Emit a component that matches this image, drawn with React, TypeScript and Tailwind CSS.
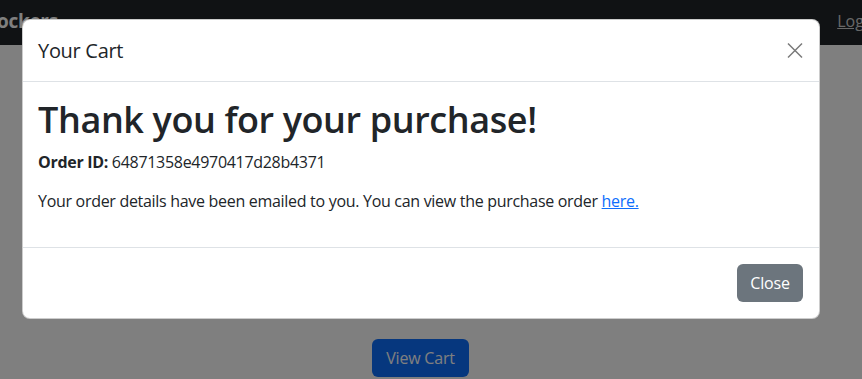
import React from "react";

export default function App() {
  return (
    <div className="relative w-[862px] h-[379px] overflow-hidden bg-white" style={{ fontFamily: '"Open Sans", "Noto Sans", sans-serif' }}>
      <nav className="h-[45px] bg-[#212529] flex items-start justify-between">
        <span className="ml-[-3px] mt-[6px] text-[19px] font-bold text-white leading-[30px] tracking-[-0.3px]">ockers</span>
        <a className="mr-[-27px] mt-[9px] text-[16px] text-[#d0d0d0] underline leading-[24px]">Logout</a>
      </nav>
      <div className="flex justify-start pl-[372px] pt-[294px]">
        <button className="h-[38px] w-[97px] rounded-[6px] bg-[#0d6efd] text-white text-[16px] tracking-[-0.2px]">View Cart</button>
      </div>
      <div className="absolute inset-0 bg-black/50">
        <div className="ml-[22px] mt-[19px] w-[798px] bg-white rounded-[8px] border border-black/20 text-[#212529]">
          <div className="h-[62px] flex items-center justify-between pl-[15px] pr-[16px] border-b border-[#dee2e6]">
            <h5 className="text-[20px] font-medium leading-[30px] tracking-[-0.3px]">Your Cart</h5>
            <button className="w-[16px] h-[16px] flex items-center justify-center text-[#7a7a7a]">
              <svg width="17" height="17" viewBox="0 0 16 16" fill="none" stroke="currentColor" strokeWidth="1.5">
                <path d="M1 1L15 15M15 1L1 15" />
              </svg>
            </button>
          </div>
          <div className="pl-[15px] pr-[16px] pt-[16px] pb-[16px]">
            <h1 className="text-[36px] font-semibold leading-[44px] mb-[8px] tracking-[-0.4px]">Thank you for your purchase!</h1>
            <p className="text-[16px] leading-[24px] mb-[15px] tracking-[-0.3px]"><b>Order ID:</b> 64871358e4970417d28b4371</p>
            <p className="text-[16px] leading-[24px] mb-[18px] tracking-[-0.3px]">Your order details have been emailed to you. You can view the purchase order <a className="text-[#0d6efd] underline">here.</a></p>
          </div>
          <div className="flex justify-end items-center px-[12px] py-[12px] border-t border-[#dee2e6]">
            <button className="m-[4px] h-[38px] w-[66px] rounded-[6px] bg-[#6c757d] text-white text-[16px] tracking-[-0.2px]">Close</button>
          </div>
        </div>
      </div>
    </div>
  );
}
